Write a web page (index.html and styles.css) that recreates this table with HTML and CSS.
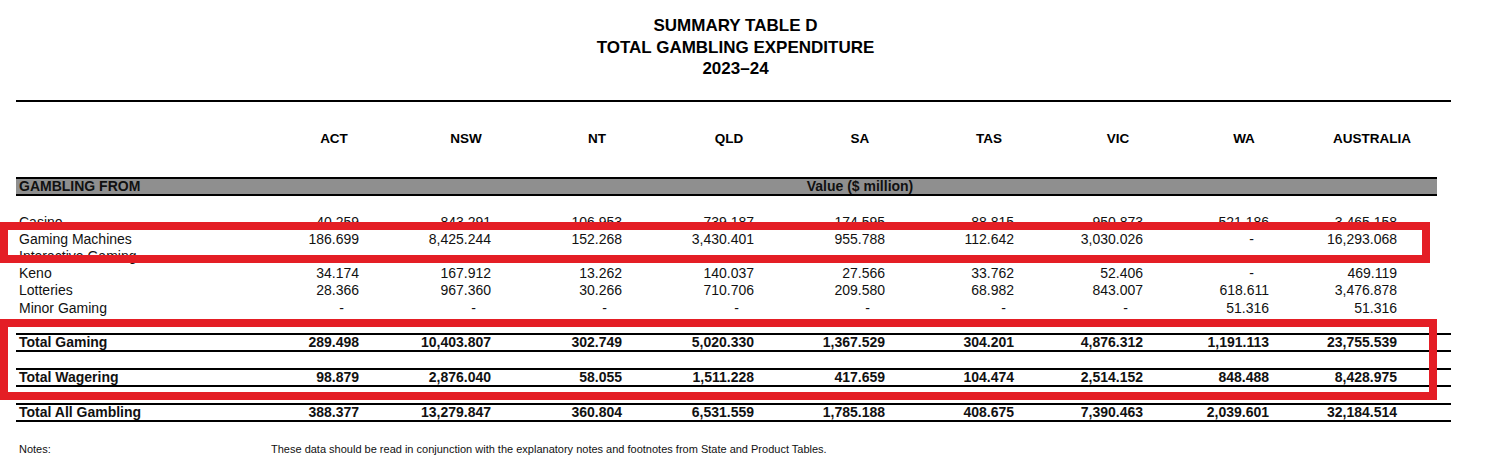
FILE: index.html
```html
<!DOCTYPE html>
<html lang="en">
<head>
<meta charset="utf-8">
<title>Summary Table D – Total Gambling Expenditure 2023–24</title>
<link rel="stylesheet" href="styles.css">
</head>
<body>
<div class="page">
  <div class="title">
    <div>SUMMARY TABLE D</div>
    <div>TOTAL GAMBLING EXPENDITURE</div>
    <div>2023–24</div>
  </div>

  <div class="table">
    <div class="rule"></div>

    <div class="grid head">
      <div></div>
      <div class="hc"><span>ACT</span></div>
      <div class="hc"><span>NSW</span></div>
      <div class="hc"><span>NT</span></div>
      <div class="hc"><span>QLD</span></div>
      <div class="hc"><span>SA</span></div>
      <div class="hc"><span>TAS</span></div>
      <div class="hc"><span>VIC</span></div>
      <div class="hc"><span>WA</span></div>
      <div class="hc"><span>AUSTRALIA</span></div>
      <div></div>
    </div>

    <div class="band">
      <div class="grid band-grid">
        <div class="band-label">GAMBLING FROM</div>
        <div></div><div></div><div></div><div></div>
        <div class="hc"><span>Value ($ million)</span></div>
        <div></div><div></div><div></div><div></div>
      </div>
    </div>

    <div class="rows">
      <div class="grid row">
        <div class="lab">Casino</div>
        <div>40.259</div><div>843.291</div><div>106.953</div><div>739.187</div><div>174.595</div><div>88.815</div><div>950.873</div><div>521.186</div><div>3,465.158</div><div></div>
      </div>
      <div class="grid row">
        <div class="lab">Gaming Machines</div>
        <div>186.699</div><div>8,425.244</div><div>152.268</div><div>3,430.401</div><div>955.788</div><div>112.642</div><div>3,030.026</div><div class="dash">-</div><div>16,293.068</div><div></div>
      </div>
      <div class="grid row">
        <div class="lab">Interactive Gaming</div>
        <div></div><div></div><div></div><div></div><div></div><div></div><div></div><div></div><div></div><div></div>
      </div>
      <div class="grid row">
        <div class="lab">Keno</div>
        <div>34.174</div><div>167.912</div><div>13.262</div><div>140.037</div><div>27.566</div><div>33.762</div><div>52.406</div><div class="dash">-</div><div>469.119</div><div></div>
      </div>
      <div class="grid row">
        <div class="lab">Lotteries</div>
        <div>28.366</div><div>967.360</div><div>30.266</div><div>710.706</div><div>209.580</div><div>68.982</div><div>843.007</div><div>618.611</div><div>3,476.878</div><div></div>
      </div>
      <div class="grid row">
        <div class="lab">Minor Gaming</div>
        <div class="dash">-</div><div class="dash">-</div><div class="dash">-</div><div class="dash">-</div><div class="dash">-</div><div class="dash tas">-</div><div class="dash">-</div><div>51.316</div><div>51.316</div><div></div>
      </div>
    </div>

    <div class="grid total first">
      <div class="lab">Total Gaming</div>
      <div>289.498</div><div>10,403.807</div><div>302.749</div><div>5,020.330</div><div>1,367.529</div><div>304.201</div><div>4,876.312</div><div>1,191.113</div><div>23,755.539</div><div></div>
    </div>
    <div class="grid total">
      <div class="lab">Total Wagering</div>
      <div>98.879</div><div>2,876.040</div><div>58.055</div><div>1,511.228</div><div>417.659</div><div>104.474</div><div>2,514.152</div><div>848.488</div><div>8,428.975</div><div></div>
    </div>
    <div class="grid total">
      <div class="lab">Total All Gambling</div>
      <div>388.377</div><div>13,279.847</div><div>360.804</div><div>6,531.559</div><div>1,785.188</div><div>408.675</div><div>7,390.463</div><div>2,039.601</div><div>32,184.514</div><div></div>
    </div>

    <div class="notes">
      <div class="notes-label">Notes:</div>
      <div>These data should be read in conjunction with the explanatory notes and footnotes from State and Product Tables.</div>
    </div>
  </div>

  <div class="highlight hl-machines"></div>
  <div class="highlight hl-totals"></div>
</div>
</body>
</html>
```

FILE: styles.css
```css
html, body {
  margin: 0;
  padding: 0;
  background: #ffffff;
}

body {
  font-family: "Liberation Sans", Arial, sans-serif;
  color: #000000;
  overflow: hidden;
}

.page {
  position: relative;
  width: 1489px;
  height: 460px;
  padding-top: 15px;
  box-sizing: border-box;
}

.title {
  margin: 0 38px 0 16px;
  padding-left: 4px;
  text-align: center;
  font-weight: bold;
  font-size: 17px;
  line-height: 21.7px;
}

.table {
  margin: 20px 38px 0 16px;
  width: 1435px;
}

.rule {
  border-top: 2px solid #000;
}

.grid {
  display: grid;
  grid-template-columns: 213px 130px 132px 131px 132px 131px 129px 129px 126px 128px 54px;
}

.grid > div {
  text-align: right;
  white-space: nowrap;
}

.grid > .lab,
.grid > .band-label {
  text-align: left;
  padding-left: 3px;
}

/* header */
.head {
  padding: 29px 0 30px;
  font-weight: bold;
  font-size: 13.5px;
  line-height: 16px;
}

.hc {
  display: flex;
  justify-content: flex-end;
}

.hc > span {
  display: flex;
  justify-content: center;
  width: 50px;
  white-space: nowrap;
}

/* grey band */
.band {
  width: 1421px;
  border-top: 2px solid #000;
  border-bottom: 2px solid #000;
  background: #8f8f8f;
  height: 15px;
  overflow: hidden;
}

.band-grid {
  font-weight: bold;
  font-size: 14px;
  line-height: 15px;
  color: #111;
}

/* data rows */
.rows {
  margin-top: 17.5px;
}

.row {
  font-size: 14px;
  line-height: 17.2px;
  height: 17.2px;
  color: #111;
}

.dash {
  padding-right: 15px;
}

.dash.tas {
  padding-right: 8px;
}

/* totals */
.total {
  border-top: 2px solid #000;
  border-bottom: 2px solid #000;
  height: 14.7px;
  line-height: 14.7px;
  font-size: 14px;
  font-weight: bold;
  color: #111;
  margin-top: 16.3px;
}

.total.first {
  margin-top: 16.6px;
}

/* notes */
.notes {
  display: grid;
  grid-template-columns: 255px auto;
  margin-top: 20.7px;
  font-size: 11px;
  line-height: 13px;
  color: #111;
}

.notes-label {
  padding-left: 3px;
}

/* red annotation boxes overlaying the table */
.highlight {
  position: absolute;
  left: 0;
  box-sizing: border-box;
  border: 8px solid #e41e25;
}

.hl-machines {
  top: 222px;
  width: 1430px;
  height: 41px;
}

.hl-totals {
  top: 319px;
  width: 1437px;
  height: 81px;
}
```
